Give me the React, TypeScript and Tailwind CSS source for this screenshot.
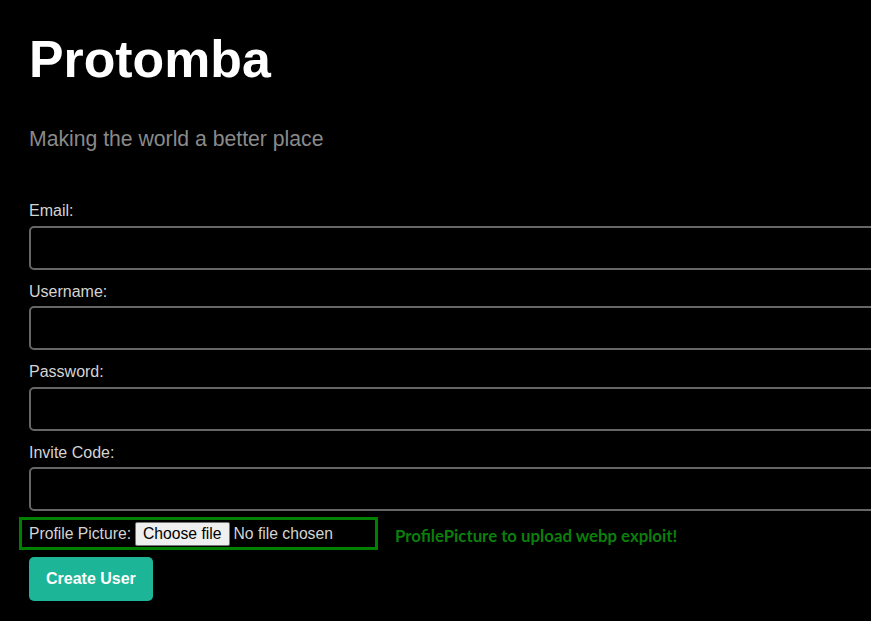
import React from "react";

const sans = { fontFamily: '"Liberation Sans", Arial, sans-serif' };

function Field({ label }: { label: string }) {
  return (
    <div className="flex flex-col pb-[13px]">
      <label className="h-[18px] text-[16px] leading-[18px] text-[#d4d4d4]">{label}</label>
      <input
        type="text"
        className="mt-[5.5px] h-[44px] w-[900px] shrink-0 rounded-[5px] border-2 border-[#666666] bg-black outline-none"
      />
    </div>
  );
}

export default function App() {
  return (
    <div className="h-[621px] w-full overflow-hidden bg-black" style={sans}>
      <div className="pl-[29px] pt-[29px]">
        <h1 className="h-[60px] text-[51.8px] font-bold leading-[60px] text-white">Protomba</h1>
        <p className="mt-[38px] h-[24px] text-[21.2px] leading-[24px] text-[#8a8a8a]">
          Making the world a better place
        </p>
        <div className="mt-[51px] flex flex-col">
          <Field label="Email:" />
          <Field label="Username:" />
          <Field label="Password:" />
          <Field label="Invite Code:" />
        </div>
        <div className="relative -mt-[4px] flex h-[27px] items-center text-[15.7px] text-[#d4d4d4]">
          <div className="pointer-events-none absolute -left-[10px] -top-[3px] h-[33px] w-[359px] border-[3px] border-[#008000]" />
          <span>Profile Picture:</span>
          <span className="ml-[4px] flex h-[24px] items-center rounded-[2px] border border-[#767676] bg-[#efefef] px-[7px] text-black">
            Choose file
          </span>
          <span className="ml-[4px]">No file chosen</span>
          <span
            className="absolute left-[366px] top-[3px] text-[16.8px] font-bold text-[#0b7f0b]"
            style={{ fontFamily: 'Lato, "Open Sans", sans-serif' }}
          >
            ProfilePicture to upload webp exploit!
          </span>
        </div>
        <button className="mt-[10px] h-[44px] rounded-[5px] bg-[#1db597] px-[17px] text-[16px] font-bold text-white">
          Create User
        </button>
      </div>
    </div>
  );
}
